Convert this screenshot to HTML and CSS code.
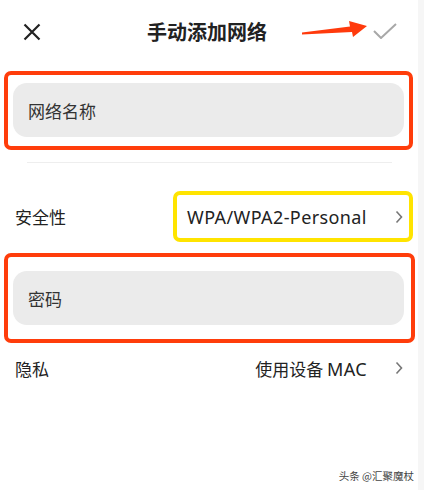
FILE: index.html
```html
<!DOCTYPE html>
<html lang="zh-CN">

<head>
    <meta charset="UTF-8">
    <meta name="viewport" content="width=device-width, initial-scale=1.0">
    <title>手动添加网络</title>
    <link rel="stylesheet" href="styles.css">
</head>

<body>
    <div class="screen">
        <header class="topbar">
            <svg class="icon-close" width="18" height="18" viewBox="0 0 18 18">
                <path d="M1.5 1.5 L16.5 16.5 M16.5 1.5 L1.5 16.5" stroke="#222" stroke-width="2.2" fill="none" />
            </svg>
            <h1>手动添加网络</h1>
            <svg class="icon-check" width="24" height="16" viewBox="0 0 24 16">
                <path d="M1 8 L8 15 L23 1" stroke="#a8a8a8" stroke-width="2" fill="none" />
            </svg>
        </header>

        <div class="mark-red first">
            <div class="field">网络名称</div>
        </div>

        <div class="divider"></div>

        <div class="row security">
            <span class="label">安全性</span>
            <div class="mark-yellow">
                <span class="value latin">WPA/WPA2-Personal</span>
                <svg class="chevron" width="8" height="14" viewBox="0 0 8 14">
                    <path d="M1.5 1.5 L6.5 7 L1.5 12.5" stroke="#777" stroke-width="1.6" fill="none" />
                </svg>
            </div>
        </div>

        <div class="mark-red second">
            <div class="field">密码</div>
        </div>

        <div class="row privacy">
            <span class="label">隐私</span>
            <div class="right">
                <span class="value">使用设备 <span class="latin">MAC</span></span>
                <svg class="chevron" width="8" height="14" viewBox="0 0 8 14">
                    <path d="M1.5 1.5 L6.5 7 L1.5 12.5" stroke="#777" stroke-width="1.6" fill="none" />
                </svg>
            </div>
        </div>

        <!-- annotation arrow pointing at the confirm button -->
        <svg class="arrow" width="70" height="20" viewBox="0 0 70 20">
            <polygon points="0,11.5 48,5.5 47,0 65,5 51,16 50,11 0,13.5" fill="#ff3a0c" />
        </svg>

        <div class="watermark">头条 @汇聚魔杖</div>
    </div>
</body>

</html>
```

FILE: styles.css
```css
body {
    margin: 0;
    padding: 0;
    background-color: #f6f6f6;
    font-family: "Noto Sans CJK SC", "Noto Sans", sans-serif;
    color: #333;
}

.screen {
    position: relative;
    width: 418px;
    height: 490px;
    background-color: #fff;
    overflow: hidden;
}

.latin {
    font-family: "Noto Sans", "Noto Sans CJK SC", sans-serif;
    font-size: 18px;
    letter-spacing: 0.4px;
}

.topbar {
    height: 62px;
    display: flex;
    align-items: center;
    justify-content: space-between;
    padding: 0 21px 0 23px;
}

.topbar h1 {
    margin: 0;
    font-size: 20px;
    font-weight: bold;
    color: #222;
}

.icon-close {
    margin-top: 1px;
}

.arrow {
    position: absolute;
    left: 302px;
    top: 21px;
}

/* annotation frames */
.mark-red {
    box-sizing: border-box;
    border: 4px solid #ff3d0b;
    border-radius: 7px;
    margin-left: 4px;
}

.mark-red.first {
    width: 409px;
    margin-top: 9px;
    padding: 8px 5px 9px 5px;
}

.mark-red.second {
    width: 411px;
    margin-top: 11px;
    padding: 14px 7px 14px 5px;
}

.field {
    height: 54px;
    display: flex;
    align-items: center;
    padding-left: 15px;
    background-color: #ebebeb;
    border-radius: 14px;
    font-size: 17px;
    color: #333;
}

.divider {
    height: 1px;
    margin: 12px 26px 0 27px;
    background-color: #eeeeee;
}

.row {
    display: flex;
    align-items: center;
    justify-content: space-between;
    font-size: 17px;
}

.row .label {
    margin-left: 15px;
    color: #222;
}

.security {
    margin-top: 28px;
}

.mark-yellow {
    box-sizing: border-box;
    width: 240px;
    height: 51px;
    border: 4px solid #ffe400;
    border-radius: 7px;
    display: flex;
    align-items: center;
    justify-content: space-between;
    padding: 0 0 0 10px;
    margin-right: 5px;
}

.mark-yellow .chevron {
    margin-right: 6px;
}

.value {
    color: #222;
}

.privacy {
    margin-top: 12px;
    height: 26px;
}

.privacy .right {
    display: flex;
    align-items: center;
    margin-right: 15px;
}

.privacy .chevron {
    margin-left: 28px;
}

.watermark {
    position: absolute;
    right: 4px;
    bottom: 7px;
    font-size: 10.5px;
    color: #444;
    text-shadow: 0 0 2px #fff;
}
```
